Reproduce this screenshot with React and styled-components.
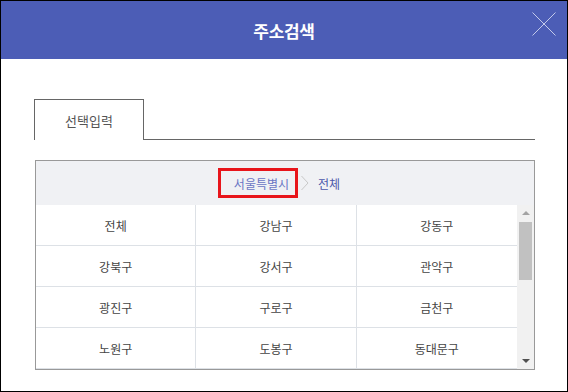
import React from "react";
import styled, { createGlobalStyle } from "styled-components";

const GlobalStyle = createGlobalStyle`
  html, body {
    margin: 0;
    padding: 0;
    background: #fff;
  }
  body {
    font-family: "Noto Sans CJK KR", "Noto Sans", sans-serif;
  }
`;

const Modal = styled.div`
  width: 568px;
  height: 392px;
  box-sizing: border-box;
  border: 1px solid #000;
  background: #fff;
  display: flex;
  flex-direction: column;
`;

const Header = styled.div`
  height: 58px;
  background: #4c5db6;
  display: flex;
  align-items: center;
  justify-content: center;
  position: relative;
`;

const Title = styled.h1`
  margin: 0;
  color: #fff;
  font-size: 17px;
  font-weight: 700;
  letter-spacing: -0.3px;
`;

const CloseButton = styled.button`
  position: absolute;
  right: 11px;
  top: 11px;
  width: 24px;
  height: 24px;
  padding: 0;
  border: none;
  background: none;
  cursor: pointer;
  display: flex;
`;

const Body = styled.div`
  padding: 40px 32px 0 33px;
  display: flex;
  flex-direction: column;
`;

const TabBar = styled.div`
  display: flex;
  border-bottom: 1px solid #666;
`;

const Tab = styled.div`
  width: 108px;
  height: 40px;
  margin-bottom: -1px;
  border: 1px solid #666;
  border-bottom: none;
  background: #fff;
  display: flex;
  align-items: center;
  justify-content: center;
  font-size: 13px;
  color: #555;
`;

const Panel = styled.div`
  margin: 20px 0 0 1px;
  border: 1px solid #999;
`;

const Crumbs = styled.div`
  height: 44px;
  background: #f0f1f4;
  display: flex;
  align-items: center;
  justify-content: center;
  gap: 3px;
  padding-right: 12px;
  font-size: 12px;
`;

const Crumb = styled.span`
  color: ${(p) => (p.$current ? "#4b57aa" : "#6a75c4")};
  ${(p) =>
    p.$marked &&
    `
    border: 3px solid #e8151b;
    height: 24px;
    display: flex;
    align-items: center;
    padding: 0 6px 0 13px;
  `}
  ${(p) => p.$current && `margin-left: 6px;`}
`;

const List = styled.div`
  height: 164px;
  display: flex;
`;

const Viewport = styled.div`
  flex: 1;
  overflow-y: auto;
  scrollbar-width: none;

  &::-webkit-scrollbar {
    display: none;
  }
`;

const Grid = styled.div`
  display: grid;
  grid-template-columns: repeat(3, 1fr);
  background: #fff;
`;

const Cell = styled.div`
  height: 40px;
  border-bottom: 1px solid #dde1e6;
  border-right: ${(p) => (p.$last ? "none" : "1px solid #dde1e6")};
  display: flex;
  align-items: center;
  justify-content: center;
  font-size: 12px;
  color: #444;
  cursor: pointer;
`;

const ScrollBar = styled.div`
  width: 17px;
  background: #f1f1f1;
  display: flex;
  flex-direction: column;
`;

const Arrow = styled.div`
  height: 16px;
  display: flex;
  align-items: center;
  justify-content: center;

  &::after {
    content: "";
    width: 0;
    height: 0;
    border-left: 4px solid transparent;
    border-right: 4px solid transparent;
    ${(p) =>
      p.$down
        ? "border-top: 4px solid #505050;"
        : "border-bottom: 4px solid #a3a3a3;"}
  }
`;

const Track = styled.div`
  flex: 1;
  padding: 1px 2px 0;
`;

const Thumb = styled.div`
  height: 58px;
  background: #c1c1c1;
`;

const districts = [
  "전체", "강남구", "강동구", "강북구", "강서구", "관악구", "광진구",
  "구로구", "금천구", "노원구", "도봉구", "동대문구", "동작구", "마포구",
  "서대문구", "서초구", "성동구", "성북구", "송파구", "양천구", "영등포구",
  "용산구", "은평구", "종로구", "중구", "중랑구",
];

export default function App() {
  return (
    <>
      <GlobalStyle />
      <Modal>
        <Header>
          <Title>주소검색</Title>
          <CloseButton aria-label="닫기">
            <svg width="24" height="24" viewBox="0 0 24 24">
              <path d="M0.5 0.5 L23.5 23.5 M23.5 0.5 L0.5 23.5" stroke="#c3c9ea" strokeWidth="1" fill="none" />
            </svg>
          </CloseButton>
        </Header>
        <Body>
          <TabBar>
            <Tab>선택입력</Tab>
          </TabBar>
          <Panel>
            <Crumbs>
              <Crumb $marked>서울특별시</Crumb>
              <svg width="8" height="16" viewBox="0 0 8 16">
                <polyline points="0.5,1 7,8 0.5,15" stroke="#c8c8c8" strokeWidth="1" fill="none" />
              </svg>
              <Crumb $current>전체</Crumb>
            </Crumbs>
            <List>
              <Viewport>
                <Grid>
                  {districts.map((name, i) => (
                    <Cell key={name} $last={i % 3 === 2}>
                      {name}
                    </Cell>
                  ))}
                </Grid>
              </Viewport>
              <ScrollBar>
                <Arrow />
                <Track>
                  <Thumb />
                </Track>
                <Arrow $down />
              </ScrollBar>
            </List>
          </Panel>
        </Body>
      </Modal>
    </>
  );
}
